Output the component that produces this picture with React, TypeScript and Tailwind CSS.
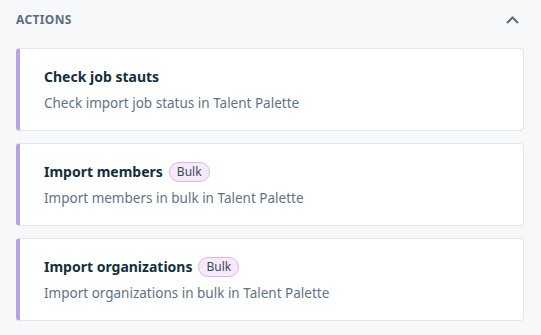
import React from "react";

type Action = {
  title: string;
  description: string;
  bulk?: boolean;
};

const actions: Action[] = [
  { title: "Check job stauts", description: "Check import job status in Talent Palette" },
  { title: "Import members", description: "Import members in bulk in Talent Palette", bulk: true },
  { title: "Import organizations", description: "Import organizations in bulk in Talent Palette", bulk: true },
];

function ActionCard({ title, description, bulk }: Action) {
  return (
    <div className="h-[83px] flex flex-col justify-center rounded border border-[#e2e5ea] border-l-4 border-l-[#b7a3e3] bg-white pl-[24px] pr-4">
      <div className="flex items-center gap-[6px]">
        <h4 className="text-[14px] font-bold text-[#132f3c] leading-5">{title}</h4>
        {bulk && (
          <span className="h-5 px-[7px] flex items-center rounded-full border border-[#dcb4ec] bg-[#f6e9fb] text-[12px] text-[#3b4a55]">
            Bulk
          </span>
        )}
      </div>
      <p className="mt-[6px] text-[13.5px] text-[#5f7382] leading-5">{description}</p>
    </div>
  );
}

export default function App() {
  return (
    <div
      className="w-[541px] h-[335px] bg-[#f7f8fa] px-4 pt-[12px]"
      style={{ fontFamily: "'Noto Sans', sans-serif" }}
    >
      {/* header */}
      <div className="flex items-center justify-between h-[16px] pr-[6px]">
        <span className="text-[12px] font-bold tracking-[0.03em] text-[#5a6e7d]">ACTIONS</span>
        <svg width="13" height="8" viewBox="0 0 13 8" fill="none">
          <path d="M1 7L6.5 1.5L12 7" stroke="#5a6e7d" strokeWidth="2" />
        </svg>
      </div>
      <div className="mt-[20px] flex flex-col gap-[12px] w-[508px]">
        {actions.map((item) => (
          <ActionCard key={item.title} {...item} />
        ))}
      </div>
    </div>
  );
}
